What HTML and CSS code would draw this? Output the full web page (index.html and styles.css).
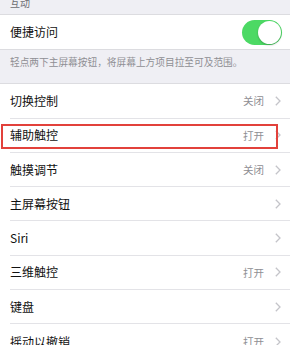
FILE: index.html
```html
<!DOCTYPE html>
<html lang="zh">
<head>
<meta charset="utf-8">
<link rel="stylesheet" href="styles.css">
</head>
<body>
<div class="page">
  <div class="section-header">互动</div>
  <div class="group">
    <div class="row">
      <div class="row-inner last">
        <span class="label">便捷访问</span>
        <span class="toggle"><span class="knob"></span></span>
      </div>
    </div>
  </div>
  <div class="section-footer">轻点两下主屏幕按钮，将屏幕上方项目拉至可及范围。</div>
  <div class="group">
    <div class="row">
      <div class="row-inner"><span class="label">切换控制</span><span class="value">关闭</span><svg class="chev" width="6" height="10" viewBox="0 0 6 10"><polyline points="0.8,0.8 5,5 0.8,9.2" fill="none" stroke="#c4c4c9" stroke-width="1.3"/></svg></div>
    </div>
    <div class="row highlighted">
      <div class="row-inner"><span class="label">辅助触控</span><span class="value">打开</span><svg class="chev" width="6" height="10" viewBox="0 0 6 10"><polyline points="0.8,0.8 5,5 0.8,9.2" fill="none" stroke="#c4c4c9" stroke-width="1.3"/></svg></div>
      <span class="highlight"></span>
    </div>
    <div class="row">
      <div class="row-inner"><span class="label">触摸调节</span><span class="value">关闭</span><svg class="chev" width="6" height="10" viewBox="0 0 6 10"><polyline points="0.8,0.8 5,5 0.8,9.2" fill="none" stroke="#c4c4c9" stroke-width="1.3"/></svg></div>
    </div>
    <div class="row">
      <div class="row-inner"><span class="label">主屏幕按钮</span><svg class="chev" width="6" height="10" viewBox="0 0 6 10"><polyline points="0.8,0.8 5,5 0.8,9.2" fill="none" stroke="#c4c4c9" stroke-width="1.3"/></svg></div>
    </div>
    <div class="row">
      <div class="row-inner"><span class="label">Siri</span><svg class="chev" width="6" height="10" viewBox="0 0 6 10"><polyline points="0.8,0.8 5,5 0.8,9.2" fill="none" stroke="#c4c4c9" stroke-width="1.3"/></svg></div>
    </div>
    <div class="row">
      <div class="row-inner"><span class="label">三维触控</span><span class="value">打开</span><svg class="chev" width="6" height="10" viewBox="0 0 6 10"><polyline points="0.8,0.8 5,5 0.8,9.2" fill="none" stroke="#c4c4c9" stroke-width="1.3"/></svg></div>
    </div>
    <div class="row">
      <div class="row-inner"><span class="label">键盘</span><svg class="chev" width="6" height="10" viewBox="0 0 6 10"><polyline points="0.8,0.8 5,5 0.8,9.2" fill="none" stroke="#c4c4c9" stroke-width="1.3"/></svg></div>
    </div>
    <div class="row">
      <div class="row-inner last"><span class="label">摇动以撤销</span><span class="value">打开</span><svg class="chev" width="6" height="10" viewBox="0 0 6 10"><polyline points="0.8,0.8 5,5 0.8,9.2" fill="none" stroke="#c4c4c9" stroke-width="1.3"/></svg></div>
    </div>
  </div>
</div>
</body>
</html>
```

FILE: styles.css
```css
html, body {
  margin: 0;
  padding: 0;
  background: #efeff4;
  overflow: hidden;
}

.page {
  width: 290px;
  height: 345px;
  overflow: hidden;
  font-family: "Noto Sans CJK SC", "Noto Sans", sans-serif;
  color: #000;
}

.section-header {
  height: 14px;
  box-sizing: border-box;
  padding: 0 0 6px 10px;
  display: flex;
  align-items: flex-end;
  font-size: 10px;
  line-height: 10px;
  color: #6d6d72;
}

.group {
  background: #fff;
  border-top: 1px solid #dcdce0;
  border-bottom: 1px solid #dcdce0;
}

.row {
  position: relative;
  height: 34.3px;
  padding-left: 10px;
  display: flex;
}

.group:first-of-type .row {
  height: 33px;
}

.row-inner {
  flex: 1;
  display: flex;
  align-items: center;
  border-bottom: 1px solid #e3e3e7;
  padding-right: 9px;
}

.row-inner.last {
  border-bottom: none;
}

.label {
  flex: 1;
  font-size: 12px;
  line-height: 14px;
  color: #111;
}

.value {
  font-size: 10.5px;
  color: #8e8e93;
  margin-right: 11px;
}

.chev {
  display: block;
  flex: none;
}

.toggle {
  position: relative;
  width: 40px;
  height: 25px;
  border-radius: 13px;
  background: #4cd964;
  margin-right: -1px;
  flex: none;
}

.knob {
  position: absolute;
  right: 1px;
  top: 1px;
  width: 23px;
  height: 23px;
  border-radius: 50%;
  background: #fff;
  box-shadow: 0 1px 2px rgba(0, 0, 0, 0.25);
}

.section-footer {
  height: 33px;
  box-sizing: border-box;
  padding: 6px 10px 0;
  font-size: 9.7px;
  line-height: 12px;
  color: #8e8e93;
  white-space: nowrap;
}

.highlight {
  position: absolute;
  left: 1px;
  top: 5.5px;
  width: 277px;
  height: 25px;
  box-sizing: border-box;
  border: 2px solid #e2413b;
  pointer-events: none;
}
```
